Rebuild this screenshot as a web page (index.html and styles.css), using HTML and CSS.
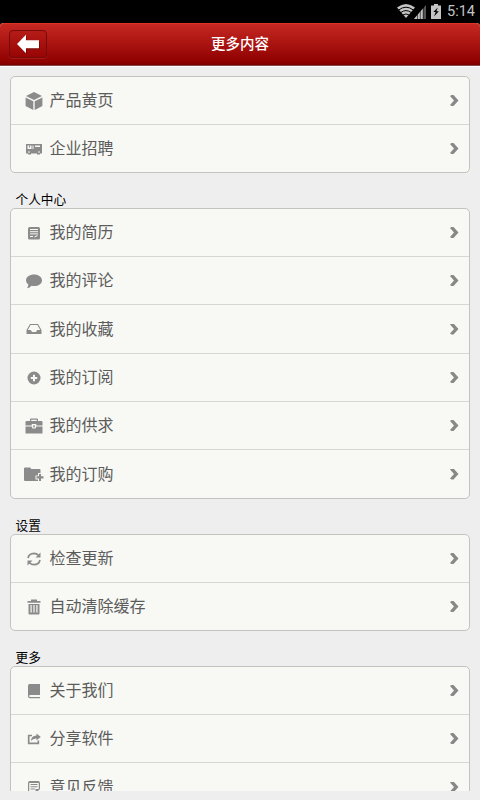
FILE: index.html
```html
<!DOCTYPE html>
<html lang="zh-CN">
<head>
<meta charset="utf-8">
<title>更多内容</title>
<link rel="stylesheet" href="styles.css">
</head>
<body>
<div class="status">
  <svg class="wifi" width="18" height="14" viewBox="0 0 18 14"><path d="M0 3.600Q9-3.400 18 3.600L9 14Z" fill="#c4c4c4"/><path d="M1.600 6Q9 .4 16.400 6M3.800 8.500Q9 4.700 14.200 8.500M6 11Q9 8.800 12 11" fill="none" stroke="#000" stroke-width="1"/></svg>
  <svg class="signal" width="12" height="14" viewBox="0 0 12 14"><path d="M12 0V14H0Z" fill="#555"/><path d="M9 3.500V14H0Z" fill="#c4c4c4"/><path d="M3.500 8V14M6.300 5V14M9.200 2V14" stroke="#000" stroke-width=".6"/></svg>
  <svg class="battery" width="10" height="15" viewBox="0 0 10 15"><path d="M3 0H7V1.500H10V15H0V1.500H3Z" fill="#c4c4c4"/><path d="M6.800 3.500L2.300 8H4.700L3 12.500L7.900 7.300H5.400Z" fill="#000"/></svg>
  <span class="clock">5:14</span>
</div>
<header class="bar">
  <button class="back"><svg width="24" height="20" viewBox="0 0 24 20"><path d="M1 10L10 .8V6.200H23V14.300H10V19.300Z" fill="#fff"/></svg></button>
  <h1>更多内容</h1>
</header>
<main>
  <ul class="card">
    <li><svg viewBox="0 0 20 20"><path d="M10 1L18 5.100L10 9.100L2 5.100ZM1.600 6.500L9.300 10.300V19L1.600 15ZM18.400 6.500L10.700 10.300V19L18.400 15Z"/></svg><span>产品黄页</span><i></i></li>
    <li><svg viewBox="0 0 20 20"><path fill-rule="evenodd" d="M2 5H18V14.500H16V15.500H13V14.500H7V15.500H4V14.500H2ZM3.500 6.500V10H7.500V6.500ZM8.500 6.500V10H9.500V6.500ZM11 6.500V8H16V6.500Z"/><path d="M5 6.500H6V8.500H5Z"/><path class="cut" d="M4 13H6M14 13H16"/></svg><span>企业招聘</span><i></i></li>
  </ul>
  <h2>个人中心</h2>
  <ul class="card">
    <li><svg viewBox="0 0 20 20"><rect x="4" y="4" width="12" height="12.500" rx="1.500"/><path class="cut" d="M6 6.500H14M6 8.700H14M6 10.900H14M6 13.500H9M10.500 14L13.500 12.500"/></svg><span>我的简历</span><i></i></li>
    <li><svg viewBox="0 0 20 20"><path d="M10 3.500C14.500 3.500 18 6 18 9.500S14.500 15 10 15Q8.700 15 7.500 14.700Q6 17 3 17.300Q4.500 15.500 4.300 13.300Q2 11.800 2 9.500C2 6 5.500 3.500 10 3.500Z"/></svg><span>我的评论</span><i></i></li>
    <li><svg viewBox="0 0 20 20"><path fill-rule="evenodd" d="M6 5H14L17.500 11V15H2.500V11ZM6.600 6L3.800 11H6.700L8 13H12L13.300 11H16.200L13.400 6Z"/></svg><span>我的收藏</span><i></i></li>
    <li><svg viewBox="0 0 20 20"><circle cx="10" cy="10" r="6.500"/><path class="cut plus" d="M10 6.800V13.200M6.800 10H13.200"/></svg><span>我的订阅</span><i></i></li>
    <li><svg viewBox="0 0 20 20"><path fill-rule="evenodd" d="M6 5V3.500Q6 2.500 7 2.500H13Q14 2.500 14 3.500V5H17.500Q18.500 5 18.500 6V9.500H12.300V8H7.700V9.500H1.500V6Q1.500 5 2.500 5ZM7.200 5H12.800V3.700H7.200ZM1.500 10.500H7.700L8.500 12.500H11.500L12.300 10.500H18.500V17.500H1.500Z"/><path d="M9.300 9.300H10.700V11.500H9.300Z"/></svg><span>我的供求</span><i></i></li>
    <li><svg viewBox="0 0 20 20"><path d="M0 4.500Q0 3.500 1 3.500H6Q7 3.500 7 5H15.500Q16.500 5 16.500 6V9H14V11.500H11.500V15.500H14V17H1Q0 17 0 16Z"/><path d="M15 10H17V12.300H19.500V14.500H17V17H15V14.500H12.500V12.300H15Z"/></svg><span>我的订购</span><i></i></li>
  </ul>
  <h2>设置</h2>
  <ul class="card">
    <li><svg viewBox="0 0 20 20"><path class="line" d="M4 9Q5 4.500 10 4.300Q12.700 4.300 14.500 6.300M16 11Q15 15.500 10 15.700Q7.300 15.700 5.500 13.700"/><path d="M16.500 3.500V8.500H11.500ZM3.500 16.500V11.500H8.500Z"/></svg><span>检查更新</span><i></i></li>
    <li><svg viewBox="0 0 20 20"><path fill-rule="evenodd" d="M7 4V2.500H13V4H16.500V5.800H3.500V4ZM4.500 7H15.500V16.500Q15.500 17.500 14.500 17.500H5.500Q4.500 17.500 4.500 16.500ZM6.500 8V15.500H7.700V8ZM9.400 8V15.500H10.600V8ZM12.300 8V15.500H13.500V8Z"/></svg><span>自动清除缓存</span><i></i></li>
  </ul>
  <h2>更多</h2>
  <ul class="card">
    <li><svg viewBox="0 0 20 20"><path fill-rule="evenodd" d="M5.500 3H16V14H6Q5.200 14 5.200 15T6 16H16V17.300H6Q4 17.300 4 15V5Q4 3 5.500 3Z"/></svg><span>关于我们</span><i></i></li>
    <li><svg viewBox="0 0 20 20"><path class="line" d="M8 6.500H4.700V14.300H14.300V11.500"/><path d="M12.500 4.500L16.800 8L12.500 11.300V9.500Q9 9.200 7 12Q7 6.600 12.500 6.400Z"/></svg><span>分享软件</span><i></i></li>
    <li><svg viewBox="0 0 20 20"><path fill-rule="evenodd" d="M6 4H14Q16 4 16 6V12L12 16H6Q4 16 4 14V6Q4 4 6 4ZM5.200 6V14H11.500V12H14.800V6ZM6.500 7H13.500V8H6.500ZM6.500 9.200H13.500V10.200H6.500ZM6.500 11.400H11V12.400H6.500Z"/></svg><span>意见反馈</span><i></i></li>
  </ul>
</main>
</body>
</html>
```
FILE: styles.css
```css
* { box-sizing: border-box; }
body {
  margin: 0;
  height: 800px;
  overflow: hidden;
  background: #eee;
  font-family: Roboto, "Noto Sans CJK SC", sans-serif;
}
.status {
  height: 23px;
  background: #000;
  display: flex;
  align-items: flex-start;
  justify-content: flex-end;
  padding: 4px 5px 0 0;
}
.signal { margin: 1px 5px 0 -1px; }
.battery { margin-right: 6px; }
.clock {
  width: 28px;
  color: #c4c4c4;
  font-size: 14.500px;
  line-height: 16px;
  white-space: nowrap;
}
.bar {
  display: grid;
  grid-template-columns: 38px 1fr 38px;
  align-items: center;
  height: 43px;
  padding: 0 9px;
  border-top: 1px solid #e03226;
  border-bottom: 1px solid #8a4747;
  border-radius: 4px 4px 0 0;
  background: linear-gradient(#c62822, #8e0000 94%, #760000);
  box-shadow: 0 -6px #000, 0 1px #fff;
  clip-path: inset(-3px 0 -1px 0);
}
.back {
  width: 38px;
  height: 28px;
  margin-top: -2px;
  padding: 0;
  display: flex;
  align-items: center;
  justify-content: center;
  border: 1px solid #750b0b;
  border-radius: 4px;
  background: linear-gradient(#b51c18, #980504);
  box-shadow: 0 1px #c0393566;
}
.back svg { filter: drop-shadow(1px 1px 0 #5008); }
h1 {
  margin: 0;
  padding-top: 1px;
  color: #fff;
  text-align: center;
  font-size: 14.500px;
  font-weight: 500;
  line-height: 20px;
}
main {
  height: 725px;
  padding: 10px 10px 0;
  overflow: hidden;
}
.card {
  margin: 0;
  padding: 0;
  list-style: none;
  border: 1px solid #c3c3bf;
  border-radius: 5px;
  background: #f8f9f4;
}
.card li {
  box-sizing: content-box;
  display: flex;
  align-items: center;
  height: 47px;
  padding: 0 10px 0 12.500px;
  border-bottom: 1px solid #d6d7d3;
  color: #5c5c5c;
  font-size: 16px;
  line-height: 24px;
}
.card li:nth-child(3n) { height: 48px; }
.card li:last-child { border-bottom: 0; }
.card svg {
  flex: none;
  width: 20px;
  height: 20px;
  margin-right: 6px;
  fill: #8b8b8b;
}
.card .cut { stroke: #f8f9f4; stroke-width: 1; fill: none; }
.card .plus { stroke-width: 2; }
.card .line { stroke: #8b8b8b; stroke-width: 1.700; fill: none; }
.card span { flex: 1; padding-top: 1px; }
.card i {
  width: 9px;
  height: 11px;
  background: #888;
  clip-path: polygon(0 1px, 1.500px 0, 3.500px 0, 8.500px 5.500px, 3.500px 11px, 1.500px 11px, 0 10px, 4px 5.500px);
}
h2 {
  height: 35px;
  margin: 0;
  padding: 18px 0 0 5.500px;
  color: #000;
  font-size: 12.700px;
  font-weight: 400;
  line-height: 18px;
}
```
